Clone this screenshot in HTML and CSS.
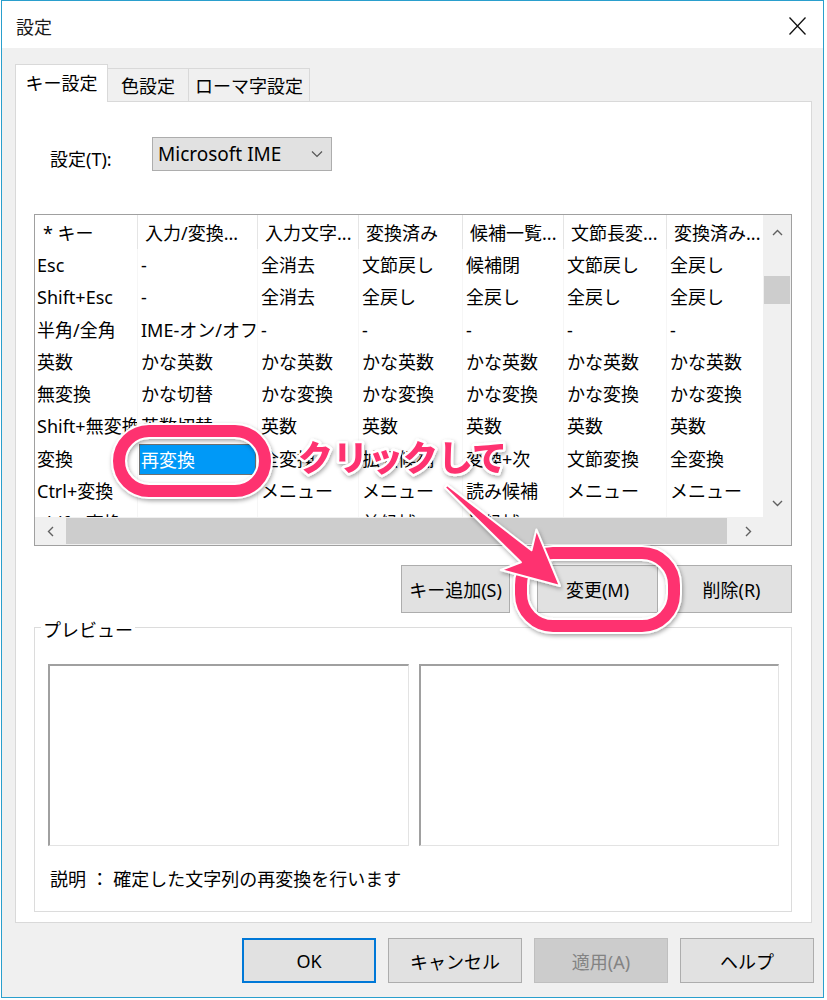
FILE: index.html
```html
<!DOCTYPE html>
<html lang="ja">
<head>
    <meta charset="UTF-8">
    <title>設定</title>
    <link rel="stylesheet" href="styles.css">
</head>
<body>

<div class="window">
    <div class="titlebar">
        <span class="title">設定</span>
        <svg class="close" width="17" height="18" viewBox="0 0 17 18">
            <path d="M0.5 0.5 L16.5 17.5 M16.5 0.5 L0.5 17.5" stroke="#111" stroke-width="1.3" fill="none"/>
        </svg>
    </div>

    <div class="body">
        <div class="tabs">
            <div class="tab active" style="width:93px">キー設定</div>
            <div class="tab" style="width:82px">色設定</div>
            <div class="tab" style="width:122px">ローマ字設定</div>
        </div>

        <div class="page">
            <div class="setting-row">
                <span class="setting-label">設定(T):</span>
                <div class="select">
                    <span>Microsoft IME</span>
                    <svg width="12" height="8" viewBox="0 0 12 8"><path d="M1 1.5 L6 6.5 L11 1.5" stroke="#555" stroke-width="1.2" fill="none"/></svg>
                </div>
            </div>

            <div class="listview">
                <div class="list-content">
                    <div class="list-row header">
                        <div class="cell first">* キー</div>
                        <div class="cell">入力/変換...</div>
                        <div class="cell">入力文字...</div>
                        <div class="cell">変換済み</div>
                        <div class="cell">候補一覧...</div>
                        <div class="cell">文節長変...</div>
                        <div class="cell">変換済み...</div>
                    </div>
                    <div class="list-row">
                        <div class="cell first">Esc</div><div class="cell">-</div><div class="cell">全消去</div><div class="cell">文節戻し</div><div class="cell">候補閉</div><div class="cell">文節戻し</div><div class="cell">全戻し</div>
                    </div>
                    <div class="list-row">
                        <div class="cell first">Shift+Esc</div><div class="cell">-</div><div class="cell">全消去</div><div class="cell">全戻し</div><div class="cell">全戻し</div><div class="cell">全戻し</div><div class="cell">全戻し</div>
                    </div>
                    <div class="list-row">
                        <div class="cell first">半角/全角</div><div class="cell">IME-オン/オフ</div><div class="cell">-</div><div class="cell">-</div><div class="cell">-</div><div class="cell">-</div><div class="cell">-</div>
                    </div>
                    <div class="list-row">
                        <div class="cell first">英数</div><div class="cell">かな英数</div><div class="cell">かな英数</div><div class="cell">かな英数</div><div class="cell">かな英数</div><div class="cell">かな英数</div><div class="cell">かな英数</div>
                    </div>
                    <div class="list-row">
                        <div class="cell first">無変換</div><div class="cell">かな切替</div><div class="cell">かな変換</div><div class="cell">かな変換</div><div class="cell">かな変換</div><div class="cell">かな変換</div><div class="cell">かな変換</div>
                    </div>
                    <div class="list-row">
                        <div class="cell first">Shift+無変換</div><div class="cell">英数切替</div><div class="cell">英数</div><div class="cell">英数</div><div class="cell">英数</div><div class="cell">英数</div><div class="cell">英数</div>
                    </div>
                    <div class="list-row">
                        <div class="cell first">変換</div><div class="cell selected">再変換</div><div class="cell">全変換</div><div class="cell">拡張候補</div><div class="cell">変換+次</div><div class="cell">文節変換</div><div class="cell">全変換</div>
                    </div>
                    <div class="list-row">
                        <div class="cell first">Ctrl+変換</div><div class="cell">メニュー</div><div class="cell">メニュー</div><div class="cell">メニュー</div><div class="cell">読み候補</div><div class="cell">メニュー</div><div class="cell">メニュー</div>
                    </div>
                    <div class="list-row">
                        <div class="cell first">Shift+変換</div><div class="cell"></div><div class="cell"></div><div class="cell">前候補</div><div class="cell">前候補</div><div class="cell"></div><div class="cell"></div>
                    </div>
                </div>

                <div class="vscroll">
                    <div class="arrow up">
                        <svg width="11" height="7" viewBox="0 0 11 7"><path d="M1 6 L5.5 1.5 L10 6" stroke="#606060" stroke-width="1.4" fill="none"/></svg>
                    </div>
                    <div class="vthumb"></div>
                    <div class="spacer"></div>
                    <div class="arrow down">
                        <svg width="11" height="7" viewBox="0 0 11 7"><path d="M1 1 L5.5 5.5 L10 1" stroke="#606060" stroke-width="1.4" fill="none"/></svg>
                    </div>
                </div>

                <div class="hscroll">
                    <div class="arrow left">
                        <svg width="7" height="11" viewBox="0 0 7 11"><path d="M6 1 L1.5 5.5 L6 10" stroke="#606060" stroke-width="1.4" fill="none"/></svg>
                    </div>
                    <div class="hthumb"></div>
                    <div class="spacer"></div>
                    <div class="arrow right">
                        <svg width="7" height="11" viewBox="0 0 7 11"><path d="M1 1 L5.5 5.5 L1 10" stroke="#606060" stroke-width="1.4" fill="none"/></svg>
                    </div>
                </div>
                <div class="corner"></div>
            </div>

            <div class="action-row">
                <button class="btn add">キー追加(S)</button>
                <button class="btn change">変更(M)</button>
                <button class="btn remove">削除(R)</button>
            </div>

            <div class="preview">
                <div class="preview-title">プレビュー</div>
                <div class="preview-boxes">
                    <div class="preview-box" style="width:361px"></div>
                    <div class="preview-box" style="width:360px"></div>
                </div>
                <div class="description">説明 ： 確定した文字列の再変換を行います</div>
            </div>
        </div>

        <div class="footer">
            <button class="btn wide default">OK</button>
            <button class="btn wide">キャンセル</button>
            <button class="btn wide disabled">適用(A)</button>
            <button class="btn wide">ヘルプ</button>
        </div>
    </div>
</div>

<!-- annotation layer drawn on top of the screenshot -->
<svg class="annotations" width="827" height="1000" viewBox="0 0 827 1000">
    <defs>
        <filter id="shadow" x="-20%" y="-20%" width="140%" height="140%">
            <feDropShadow dx="1" dy="2" stdDeviation="2" flood-color="#000" flood-opacity="0.35"/>
        </filter>
    </defs>
    <g filter="url(#shadow)">
        <rect x="119" y="431" width="146" height="60" rx="30" fill="none" stroke="#fff" stroke-width="16"/>
        <rect x="119" y="431" width="146" height="60" rx="30" fill="none" stroke="#fe3170" stroke-width="12"/>

        <rect x="521" y="553" width="153" height="73" rx="32" fill="none" stroke="#fff" stroke-width="16"/>
        <rect x="521" y="553" width="153" height="73" rx="32" fill="none" stroke="#fe3170" stroke-width="12"/>

        <polygon points="447,484.9 531.5,550.3 536.4,529.4 560,586 500.8,570 520.9,562.3 445,487.6"
                 fill="#fe3170" stroke="#fff" stroke-width="2" stroke-linejoin="round"/>

        <text class="callout" x="298" y="471">クリックして</text>
    </g>
</svg>

</body>
</html>
```

FILE: styles.css
```css
* {
    box-sizing: border-box;
}
body {
    margin: 0;
    width: 827px;
    height: 1000px;
    position: relative;
    overflow: hidden;
    background-color: #ffffff;
    font-family: "Noto Sans", "Noto Sans CJK JP", sans-serif;
    font-size: 18px;
    color: #000000;
}
.window {
    margin-left: 1px;
    width: 823px;
    height: 998px;
    border: 1px solid #2a9fcd;
    background-color: #f0f0f0;
    display: flex;
    flex-direction: column;
}
.titlebar {
    flex: none;
    height: 47px;
    background-color: #ffffff;
    display: flex;
    align-items: center;
    justify-content: space-between;
    padding: 2px 17px 0 14px;
}
.title {
    font-size: 18px;
    color: #1a1a1a;
}
.body {
    flex: 1;
    padding: 16px 9px 0 13px;
}
.tabs {
    display: flex;
    align-items: flex-end;
    height: 37px;
}
.tab {
    height: 33px;
    border: 1px solid #d9d9d9;
    border-bottom: none;
    margin-left: -1px;
    background-color: #f0f0f0;
    display: flex;
    align-items: center;
    justify-content: center;
    font-size: 18px;
}
.tab.active {
    margin-left: 0;
    height: 38px;
    margin-bottom: -1px;
    background-color: #ffffff;
    position: relative;
    z-index: 1;
    padding-bottom: 3px;
}
.page {
    width: 797px;
    height: 822px;
    background-color: #ffffff;
    border: 1px solid #d9d9d9;
}
.setting-row {
    display: flex;
    align-items: center;
    height: 34px;
    margin: 35px 0 0 34px;
}
.setting-label {
    width: 102px;
    padding-top: 8px;
}
.select {
    width: 180px;
    height: 34px;
    background-color: #e1e1e1;
    border: 1px solid #adadad;
    display: flex;
    align-items: center;
    justify-content: space-between;
    padding: 0 8px 0 5px;
    font-size: 19px;
}

/* list view */
.listview {
    width: 758px;
    height: 332px;
    margin: 43px 0 0 18px;
    border: 1px solid #a0a0a0;
    display: grid;
    grid-template-columns: 728px 28px;
    grid-template-rows: 302px 28px;
}
.list-content {
    overflow: hidden;
    background-color: #ffffff;
}
.list-row {
    display: grid;
    grid-template-columns: 103px 120px 101px 104px 101px 103px 103px;
    height: 32.3px;
}
.cell {
    white-space: nowrap;
    overflow: hidden;
    padding-left: 3px;
    line-height: 32px;
    border-right: 1px solid #f6f6f6;
}
.cell.first {
    padding-left: 2px;
}
.list-row.header {
    height: 34px;
}
.header .cell {
    line-height: 37px;
    padding-left: 7px;
    border-right: 1px solid #e5e5e5;
}
.header .cell.first {
    padding-left: 8px;
}
.cell.selected {
    margin: 1px 1px 0 1px;
    padding-left: 2px;
    background-color: #0099f7;
    color: #ffffff;
    box-shadow: inset 0 0 0 1px #707070;
}
.vscroll {
    background-color: #f0f0f0;
    display: flex;
    flex-direction: column;
    align-items: center;
}
.vscroll .arrow.up {
    height: 34px;
    display: flex;
    align-items: center;
}
.vscroll .arrow.down {
    height: 28px;
    display: flex;
    align-items: center;
}
.vthumb {
    margin-top: 27px;
    width: 26px;
    height: 28px;
    background-color: #cdcdcd;
}
.spacer {
    flex: 1;
}
.hscroll {
    background-color: #f0f0f0;
    display: flex;
    align-items: center;
}
.hscroll .arrow {
    width: 30px;
    height: 28px;
    display: flex;
    align-items: center;
    justify-content: center;
}
.hscroll .arrow.left {
    width: 31px;
}
.hthumb {
    width: 661px;
    height: 26px;
    background-color: #cdcdcd;
}
.corner {
    background-color: #f0f0f0;
}

/* buttons */
.btn {
    font-family: inherit;
    font-size: 18px;
    color: #000000;
    background-color: #e1e1e1;
    border: 1px solid #adadad;
    padding: 0;
    display: flex;
    align-items: center;
    justify-content: center;
}
.action-row {
    display: flex;
    justify-content: flex-end;
    margin: 19px 19px 0 0;
}
.action-row .btn {
    height: 48px;
}
.btn.add {
    width: 109px;
}
.btn.change {
    width: 121px;
    margin-left: 27px;
}
.btn.remove {
    width: 121px;
    margin-left: 13px;
}

/* preview group */
.preview {
    height: 285px;
    margin: 14px 19px 0 18px;
    border: 1px solid #dcdcdc;
}
.preview-title {
    width: fit-content;
    margin: -8px 0 0 6px;
    padding: 0 2px;
    line-height: 20px;
    background-color: #ffffff;
}
.preview-boxes {
    display: flex;
    gap: 10px;
    margin: 24px 0 0 13px;
}
.preview-box {
    height: 182px;
    background-color: #ffffff;
    border-style: solid;
    border-width: 2px 1px 1px 2px;
    border-color: #a0a0a0 #e3e3e3 #e3e3e3 #a0a0a0;
}
.description {
    margin: 23px 0 0 15px;
    line-height: 20px;
}

.footer {
    display: flex;
    justify-content: flex-end;
    gap: 12px;
    margin-top: 15px;
}
.btn.wide {
    width: 134px;
    height: 45px;
}
.btn.default {
    border: 2px solid #0078d7;
}
.btn.disabled {
    background-color: #cccccc;
    border-color: #bfbfbf;
    color: #838383;
}

.annotations {
    position: absolute;
    top: 0;
    left: 0;
    pointer-events: none;
}
.callout {
    font-family: "Noto Sans CJK JP", sans-serif;
    font-size: 35px;
    font-weight: 900;
    fill: #fe3170;
    stroke: #ffffff;
    stroke-width: 5px;
    stroke-linejoin: round;
    paint-order: stroke;
}
```
